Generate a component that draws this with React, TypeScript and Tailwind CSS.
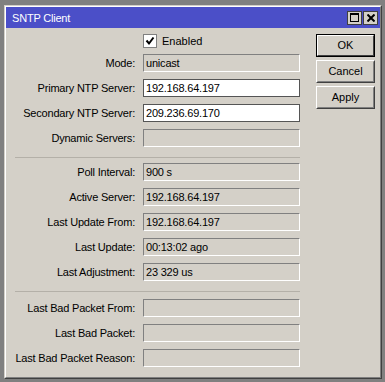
import React from "react";

const font = { fontFamily: '"Liberation Sans", Arial, sans-serif' };

function Field({ label, value, editable }: { label: string; value?: string; editable?: boolean }) {
  return (
    <div className="flex items-center h-[18px]">
      <div className="w-[129px] text-right whitespace-nowrap">{label}</div>
      <div
        className={
          editable
            ? "ml-[8px] w-[157px] h-[18px] bg-white border border-[#555555] flex items-center pl-[2px] whitespace-nowrap"
            : "ml-[8px] w-[157px] h-[18px] bg-[#d4d0c8] border border-t-[#808080] border-l-[#808080] border-b-white border-r-white flex items-center pl-[2px] whitespace-nowrap"
        }
      >
        {value}
      </div>
    </div>
  );
}

function Button({ label, def }: { label: string; def?: boolean }) {
  return (
    <div
      className={
        def
          ? "h-[23px] w-[59px] border border-black flex"
          : "h-[23px] w-[59px] border border-t-white border-l-white border-b-[#404040] border-r-[#404040] flex"
      }
    >
      <div
        className={
          def
            ? "flex-1 flex items-center justify-center border border-t-white border-l-white border-b-[#404040] border-r-[#404040]"
            : "flex-1 flex items-center justify-center border border-t-[#d4d0c8] border-l-[#d4d0c8] border-b-[#808080] border-r-[#808080]"
        }
      >
        <span className="text-[11px] tracking-normal">{label}</span>
      </div>
    </div>
  );
}

export default function App() {
  return (
    <div
      className="w-[385px] h-[382px] bg-[#808080] pt-[5px] pl-[4px] text-[11px] tracking-[-0.2px] text-black leading-none"
      style={font}
    >
      <div className="w-[378px] h-[374px] border border-t-[#d4d0c8] border-l-[#d4d0c8] border-b-[#404040] border-r-[#404040] flex flex-col">
        <div className="flex-1 flex flex-col border border-t-white border-l-white border-b-[#808080] border-r-[#808080]">
          {/* Title bar */}
          <div className="h-[21px] bg-[#4b4fc8] flex items-center pl-[6px] pr-[2px]">
            <span className="text-white text-[11px] pt-[2px]">SNTP Client</span>
            <div className="ml-auto flex gap-[1px]">
              <div className="w-[15px] h-[14px] bg-[#d4d0c8] border border-[#404040] flex items-center justify-center">
                <svg width="9" height="9" viewBox="0 0 9 9">
                  <rect x="0.5" y="0.5" width="8" height="8" fill="none" stroke="#000" />
                  <rect x="0" y="0" width="9" height="2" fill="#000" />
                </svg>
              </div>
              <div className="w-[15px] h-[14px] bg-[#d4d0c8] border border-[#404040] flex items-center justify-center">
                <svg width="8" height="8" viewBox="0 0 8 8">
                  <path d="M0.5 0.5 L7.5 7.5 M7.5 0.5 L0.5 7.5" stroke="#000" strokeWidth="2" />
                </svg>
              </div>
            </div>
          </div>
          {/* Body */}
          <div className="flex-1 bg-[#d4d0c8] flex">
            <div className="w-[294px] flex flex-col">
              <div className="mt-[6px] h-[14px] flex items-center">
                <div className="ml-[137px] w-[14px] h-[14px] bg-white border border-[#808080] flex items-center justify-center">
                  <svg width="10" height="10" viewBox="0 0 10 10">
                    <path d="M1.5 4.5 L4 7.5 L8.5 1.5" fill="none" stroke="#000" strokeWidth="2" />
                  </svg>
                </div>
                <span className="ml-[5px] text-[11px] tracking-normal">Enabled</span>
              </div>
              <div className="mt-[6px] flex flex-col gap-[7px]">
                <Field label="Mode:" value="unicast" />
                <Field label="Primary NTP Server:" value="192.168.64.197" editable />
                <Field label="Secondary NTP Server:" value="209.236.69.170" editable />
                <Field label="Dynamic Servers:" />
              </div>
              <div className="ml-[9px] mt-[10px] h-[1px] bg-[#b4b0a8]" />
              <div className="mt-[5px] flex flex-col gap-[7px]">
                <Field label="Poll Interval:" value="900 s" />
                <Field label="Active Server:" value="192.168.64.197" />
                <Field label="Last Update From:" value="192.168.64.197" />
                <Field label="Last Update:" value="00:13:02 ago" />
                <Field label="Last Adjustment:" value="23 329 us" />
              </div>
              <div className="ml-[9px] mt-[10px] h-[1px] bg-[#b4b0a8]" />
              <div className="mt-[7px] flex flex-col gap-[7px]">
                <Field label="Last Bad Packet From:" />
                <Field label="Last Bad Packet:" />
                <Field label="Last Bad Packet Reason:" />
              </div>
            </div>
            <div className="ml-[16px] mt-[6px] flex flex-col gap-[3px]">
              <Button label="OK" def />
              <Button label="Cancel" />
              <Button label="Apply" />
            </div>
          </div>
        </div>
      </div>
    </div>
  );
}
